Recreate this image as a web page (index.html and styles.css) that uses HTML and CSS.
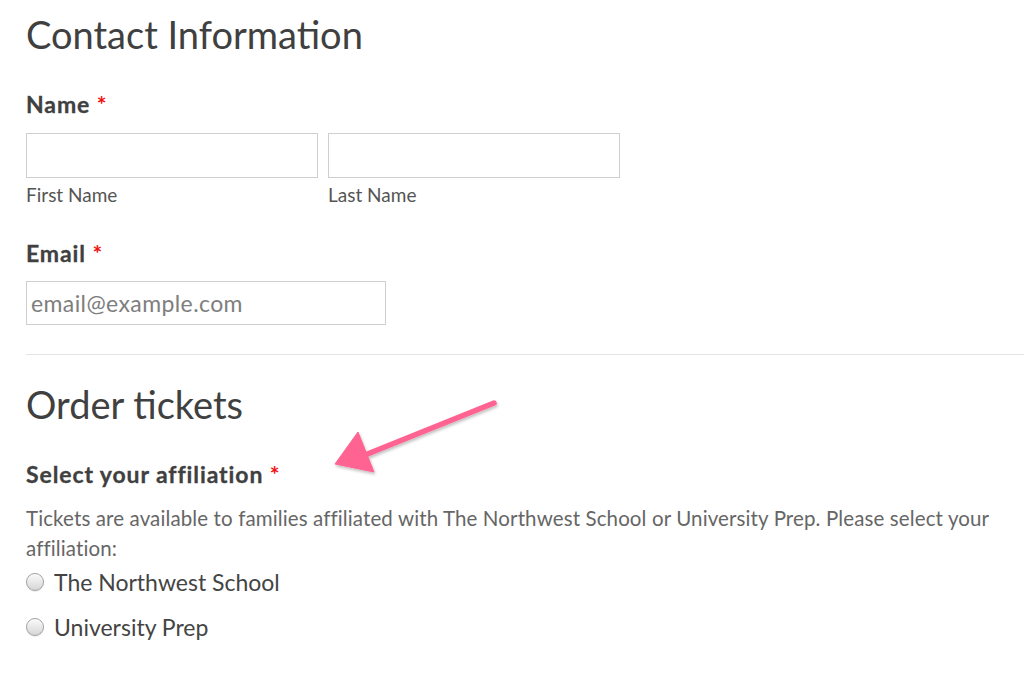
FILE: index.html
```html
<!DOCTYPE html>
<html>
<head>
<meta charset="utf-8">
<link rel="stylesheet" href="styles.css">
</head>
<body>
<div class="page">
  <h1 class="title">Contact Information</h1>
  <div class="field">
    <div class="label">Name <span class="req">*</span></div>
    <div class="name-row">
      <div class="sub">
        <input class="box name-box" type="text">
        <div class="hint">First Name</div>
      </div>
      <div class="sub">
        <input class="box name-box" type="text">
        <div class="hint">Last Name</div>
      </div>
    </div>
  </div>
  <div class="field email-field">
    <div class="label">Email <span class="req">*</span></div>
    <input class="box email-box" type="text" placeholder="email@example.com">
  </div>
  <div class="rule"></div>
  <h1 class="title title2">Order tickets</h1>
  <div class="field aff-field">
    <div class="label">Select your affiliation <span class="req">*</span></div>
    <p class="desc">Tickets are available to families affiliated with The Northwest School or University Prep. Please select your affiliation:</p>
    <label class="opt"><span class="radio"></span>The Northwest School</label>
    <label class="opt"><span class="radio"></span>University Prep</label>
  </div>
  <svg class="arrow" width="200" height="110" viewBox="0 0 200 110">
    <defs>
      <filter id="sh" x="-20%" y="-20%" width="140%" height="140%">
        <feDropShadow dx="1" dy="2" stdDeviation="1.5" flood-color="#000" flood-opacity="0.25"/>
      </filter>
    </defs>
    <g filter="url(#sh)" fill="#ff6391" stroke="#ff6391">
      <line x1="194" y1="23" x2="60" y2="77" stroke-width="5.5" stroke-linecap="round"/>
      <polygon points="35,84 58,52 74,92" stroke-width="1" stroke-linejoin="round"/>
    </g>
  </svg>
</div>
</body>
</html>
```
FILE: styles.css
```css
html, body {
  margin: 0;
  padding: 0;
  background: #fff;
}
body {
  font-family: Lato, "Open Sans", sans-serif;
  color: #444;
}
.page {
  position: relative;
  padding: 11px 0 0 26px;
  width: 998px;
}
.title {
  font-size: 38px;
  font-weight: 400;
  line-height: 46px;
  margin: 0;
  color: #404040;
}
.field {
  margin-top: 33px;
}
.label {
  font-size: 23px;
  font-weight: 700;
  line-height: 28px;
  letter-spacing: 0.9px;
  color: #404040;
  -webkit-text-stroke: 0.3px #404040;
}
.req {
  color: #f21010;
  letter-spacing: 0;
  -webkit-text-stroke: 0;
}
.name-row {
  display: flex;
  gap: 10px;
  margin-top: 15px;
}
.box {
  display: block;
  box-sizing: border-box;
  border: 1px solid #cfcfcf;
  margin: 0;
  padding: 0 4px;
  font-family: inherit;
  background: #fff;
  outline: none;
}
.name-box {
  width: 292px;
  height: 45px;
}
.hint {
  font-size: 19px;
  line-height: 24px;
  color: #555;
  margin-top: 5px;
}
.email-field {
  margin-top: 32px;
}
.email-box {
  width: 360px;
  height: 44px;
  margin-top: 14px;
  font-size: 23px;
  letter-spacing: 0.4px;
  color: #444;
}
.email-box::placeholder {
  color: #7e7e7e;
}
.rule {
  height: 1px;
  background: #e4e4e4;
  margin-top: 29px;
}
.title2 {
  margin-top: 26px;
}
.aff-field {
  margin-top: 33px;
}
.desc {
  margin: 15px 0 0 0;
  font-size: 20.5px;
  letter-spacing: 0.12px;
  line-height: 30px;
  color: #666;
}
.opt {
  display: flex;
  align-items: center;
  gap: 10px;
  font-size: 23px;
  line-height: 30px;
  color: #444;
  margin-top: 4px;
}
.opt + .opt {
  margin-top: 15px;
}
.radio {
  width: 18px;
  height: 18px;
  box-sizing: border-box;
  border-radius: 50%;
  border: 1px solid #a0a0a0;
  background: linear-gradient(#fafafa, #d6d6d6);
  box-shadow: inset 0 1px 1px rgba(255,255,255,0.8), 0 1px 1px rgba(0,0,0,0.08);
}
.arrow {
  position: absolute;
  left: 300px;
  top: 380px;
}
```
